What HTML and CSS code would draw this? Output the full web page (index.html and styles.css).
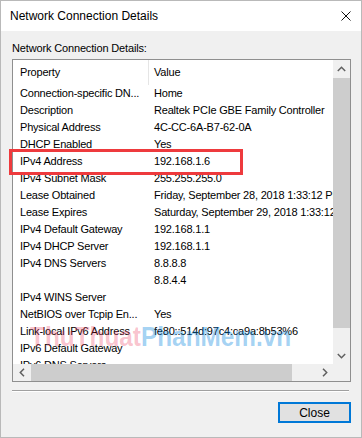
FILE: index.html
```html
<!DOCTYPE html>
<html lang="en">
<head>
    <meta charset="UTF-8">
    <meta name="viewport" content="width=device-width, initial-scale=1.0">
    <title>Network Connection Details</title>
    <link rel="stylesheet" href="styles.css">
</head>
<body>

    <div class="window">
        <div class="titlebar">
            <span class="title">Network Connection Details</span>
            <svg class="closeX" width="10" height="10" viewBox="0 0 10 10">
                <path d="M0.5 0.5 L9.5 9.5 M9.5 0.5 L0.5 9.5" stroke="#111" stroke-width="1" fill="none"/>
            </svg>
        </div>

        <div class="content">
            <div class="label">Network Connection Details:</div>

            <div class="listbox">
                <div class="list">
                    <div class="header">
                        <div class="cell c1">Property</div>
                        <div class="cell c2">Value</div>
                    </div>
                    <div class="row"><div class="cell c1">Connection-specific DN...</div><div class="cell c2">Home</div></div>
                    <div class="row"><div class="cell c1">Description</div><div class="cell c2">Realtek PCIe GBE Family Controller</div></div>
                    <div class="row"><div class="cell c1">Physical Address</div><div class="cell c2">4C-CC-6A-B7-62-0A</div></div>
                    <div class="row"><div class="cell c1">DHCP Enabled</div><div class="cell c2">Yes</div></div>
                    <div class="row"><div class="cell c1">IPv4 Address</div><div class="cell c2">192.168.1.6</div></div>
                    <div class="row"><div class="cell c1">IPv4 Subnet Mask</div><div class="cell c2">255.255.255.0</div></div>
                    <div class="row"><div class="cell c1">Lease Obtained</div><div class="cell c2">Friday, September 28, 2018 1:33:12 PM</div></div>
                    <div class="row"><div class="cell c1">Lease Expires</div><div class="cell c2">Saturday, September 29, 2018 1:33:12 PM</div></div>
                    <div class="row"><div class="cell c1">IPv4 Default Gateway</div><div class="cell c2">192.168.1.1</div></div>
                    <div class="row"><div class="cell c1">IPv4 DHCP Server</div><div class="cell c2">192.168.1.1</div></div>
                    <div class="row"><div class="cell c1">IPv4 DNS Servers</div><div class="cell c2">8.8.8.8</div></div>
                    <div class="row"><div class="cell c1"></div><div class="cell c2">8.8.4.4</div></div>
                    <div class="row"><div class="cell c1">IPv4 WINS Server</div><div class="cell c2"></div></div>
                    <div class="row"><div class="cell c1">NetBIOS over Tcpip En...</div><div class="cell c2">Yes</div></div>
                    <div class="row"><div class="cell c1">Link-local IPv6 Address</div><div class="cell c2">fe80::514d:97c4:ca9a:8b53%6</div></div>
                    <div class="row"><div class="cell c1">IPv6 Default Gateway</div><div class="cell c2"></div></div>
                    <div class="row"><div class="cell c1">IPv6 DNS Servers</div><div class="cell c2"></div></div>
                </div>

                <div class="vscroll">
                    <div class="arrow">
                        <svg width="9" height="6" viewBox="0 0 9 6"><polyline points="0.8,5 4.5,1.3 8.2,5" stroke="#606060" stroke-width="1.5" fill="none"/></svg>
                    </div>
                    <div class="vthumb"></div>
                    <div class="track"></div>
                    <div class="arrow">
                        <svg width="9" height="6" viewBox="0 0 9 6"><polyline points="0.8,1 4.5,4.7 8.2,1" stroke="#606060" stroke-width="1.5" fill="none"/></svg>
                    </div>
                </div>

                <div class="hscroll">
                    <div class="arrow">
                        <svg width="6" height="9" viewBox="0 0 6 9"><polyline points="5,0.8 1.3,4.5 5,8.2" stroke="#606060" stroke-width="1.5" fill="none"/></svg>
                    </div>
                    <div class="hthumb"></div>
                    <div class="track"></div>
                    <div class="arrow">
                        <svg width="6" height="9" viewBox="0 0 6 9"><polyline points="1,0.8 4.7,4.5 1,8.2" stroke="#606060" stroke-width="1.5" fill="none"/></svg>
                    </div>
                </div>

                <div class="corner"></div>
            </div>

            <div class="separator"></div>

            <div class="footer">
                <button class="btnClose">Close</button>
            </div>
        </div>

        <!-- marker drawn on the screenshot -->
        <div class="highlight"></div>
        <div class="watermark"><span class="wmPink">ThuThuat</span><span class="wmBlue">PhanMem.vn</span></div>
    </div>

</body>
</html>
```

FILE: styles.css
```css
body {
    margin: 0;
    padding: 0;
    background-color: #ffffff;
    font-family: "Liberation Sans", Arial, sans-serif;
}

.window {
    position: relative;
    width: 362px;
    height: 438px;
    box-sizing: border-box;
    border: 1px solid #b9b9b9;
    background-color: #f0f0f0;
    display: flex;
    flex-direction: column;
    overflow: hidden;
}

.titlebar {
    height: 30px;
    background-color: #ffffff;
    display: flex;
    align-items: center;
    padding-left: 9px;
    padding-right: 10px;
}

.title {
    font-size: 12px;
    color: #000;
}

.closeX {
    margin-left: auto;
}

.content {
    padding: 0 10px 0 11px;
}

.label {
    margin-top: 11px;
    font-size: 11px;
    letter-spacing: -0.15px;
    line-height: 13px;
    color: #000;
}

.listbox {
    margin-top: 4px;
    height: 323px;
    box-sizing: border-box;
    border: 1px solid #8f8f8f;
    background-color: #fff;
    display: grid;
    grid-template-columns: minmax(0, 1fr) 17px;
    grid-template-rows: minmax(0, 1fr) 17px;
}

.list {
    overflow: hidden;
    font-size: 11px;
    letter-spacing: -0.2px;
    color: #000;
}

.header,
.row {
    display: grid;
    grid-template-columns: 136px minmax(0, 1fr);
    white-space: nowrap;
}

.header {
    height: 25px;
    line-height: 25px;
}

.row {
    height: 17px;
    line-height: 17px;
}

.c1 {
    padding-left: 7px;
    overflow: hidden;
}

.c2 {
    padding-left: 5px;
}

.header .c1 {
    border-right: 1px solid #e5e5e5;
}

.vscroll {
    background-color: #f0f0f0;
    display: flex;
    flex-direction: column;
}

.hscroll {
    background-color: #f0f0f0;
    display: flex;
}

.arrow {
    width: 17px;
    height: 17px;
    flex: none;
    display: flex;
    align-items: center;
    justify-content: center;
}

.vthumb {
    height: 250px;
    margin-top: 1px;
    background-color: #cdcdcd;
}

.hthumb {
    width: 261px;
    margin-left: 1px;
    background-color: #cdcdcd;
}

.track {
    flex: 1;
}

.corner {
    background-color: #f0f0f0;
}

.separator {
    margin-top: 8px;
    margin-right: 2px;
    height: 1px;
    background-color: #a0a0a0;
    border-bottom: 1px solid #fff;
}

.footer {
    display: flex;
    justify-content: flex-end;
    margin-top: 10px;
}

.btnClose {
    width: 73px;
    height: 21px;
    padding: 0;
    border: 2px solid #0078d7;
    background-color: #e1e1e1;
    font-family: "Liberation Sans", Arial, sans-serif;
    font-size: 12px;
    color: #000;
}

.highlight {
    position: absolute;
    left: 8px;
    top: 148px;
    width: 234px;
    height: 26px;
    box-sizing: border-box;
    border: 3px solid #ee3a3d;
}

.watermark {
    position: absolute;
    left: 29px;
    top: 320px;
    font-size: 28px;
    line-height: 32px;
    font-weight: bold;
    white-space: nowrap;
    transform: scaleX(0.87);
    transform-origin: left top;
    pointer-events: none;
}

.wmPink {
    color: rgba(235, 50, 85, 0.3);
}

.wmBlue {
    color: rgba(20, 140, 225, 0.4);
}
```
